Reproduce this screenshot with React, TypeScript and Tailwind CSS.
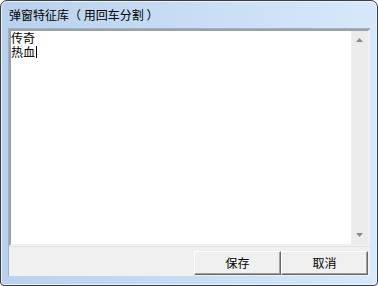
const font = { fontFamily: '"Noto Sans CJK SC", "Liberation Sans", sans-serif' };

function Button({ label }: { label: string }) {
  return (
    <button
      className="w-[87px] h-[24px] bg-[#f0f0f0] border border-t-white border-l-white border-r-[#696969] border-b-[#696969] shadow-[inset_-1px_-1px_0_#a0a0a0] text-[12px] leading-[22px] text-black"
      style={font}
    >
      {label}
    </button>
  );
}

export default function App() {
  return (
    <div className="w-[378px] h-[286px] bg-white">
      <div className="w-[378px] h-[286px] border border-[#3b3f45] rounded-t-[7px] rounded-b-[4px] bg-gradient-to-r from-[#b9d1ec] via-[#c8ddf4] to-[#d7e8fa] shadow-[inset_0_0_0_1px_#e8f2fd] flex flex-col">
        <div className="h-[27px] pl-[8px] flex items-center text-[12px] text-black whitespace-pre" style={font}>
          弹窗特征库（ 用回车分割 ）
        </div>
        <div className="mx-[7px] h-[248px] flex flex-col bg-[#f0f0f0] border-l border-t border-[#9fb1c7]">
          <div className="h-[217px] flex border-2 border-t-[#a0a0a0] border-l-[#a0a0a0] border-r-[#f0f0f0] border-b-[#f0f0f0]">
            <div className="flex-1 bg-white text-[12px] leading-[14px] text-black" style={font}>
              <div>传奇</div>
              <div className="flex items-center">
                热血<span className="inline-block w-px h-[12px] bg-black ml-[1px]" />
              </div>
            </div>
            <div className="w-[17px] bg-[#ececec] flex flex-col justify-between items-center py-[7px]">
              <svg width="7" height="4" viewBox="0 0 7 4">
                <path d="M3.5 0 L7 4 L0 4 Z" fill="#8a8a8a" />
              </svg>
              <svg width="7" height="4" viewBox="0 0 7 4">
                <path d="M0 0 L7 0 L3.5 4 Z" fill="#8a8a8a" />
              </svg>
            </div>
          </div>
          <div className="flex-1 flex justify-end pt-[4px] pr-[2px] border-t border-[#e3e3e3]">
            <Button label="保存" />
            <Button label="取消" />
          </div>
        </div>
      </div>
    </div>
  );
}
